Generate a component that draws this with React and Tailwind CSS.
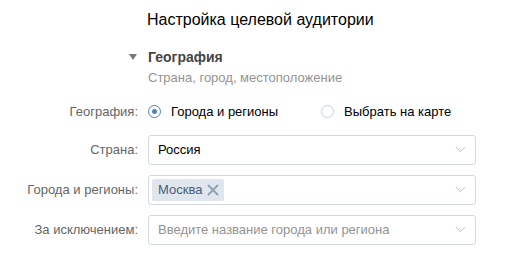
import { ChevronDown, X } from 'lucide-react'

function Radio({ checked, label }) {
  return (
    <label className="flex items-center gap-[10px] cursor-pointer">
      <span
        className={`w-[13px] h-[13px] rounded-full border flex items-center justify-center ${
          checked ? 'border-[#5181b8]' : 'border-[#c5d0db]'
        }`}
      >
        {checked && <span className="w-[5px] h-[5px] rounded-full bg-[#5181b8]" />}
      </span>
      <span className="text-[13px] text-black">{label}</span>
    </label>
  )
}

function SelectBox({ children }) {
  return (
    <div className="h-[30px] w-[328px] border border-[#d3d9de] rounded-[3px] bg-white flex items-center pl-[3px] pr-[6px]">
      <div className="flex-1 flex items-center min-w-0">{children}</div>
      <ChevronDown className="w-[17px] h-[17px] text-[#b8bec4]" strokeWidth={1.4} />
    </div>
  )
}

function Row({ label, children }) {
  return (
    <div className="grid grid-cols-[138px_1fr] gap-[10px] items-center">
      <span className="text-right text-[13px] text-[#656565]">{label}</span>
      <div>{children}</div>
    </div>
  )
}

export default function App() {
  return (
    <div className="w-[508px] h-[256px] bg-white font-['Liberation_Sans',Arial,sans-serif] overflow-hidden">
      {/* Title */}
      <div className="pl-[147px] pt-[9px]">
        <h1 className="text-[16px] leading-[22px] text-black">Настройка целевой аудитории</h1>
      </div>

      {/* Section heading */}
      <div className="pl-[129px] mt-[19px] flex items-start">
        <span className="mt-[4px] mr-[11px] w-0 h-0 border-l-[4px] border-r-[4px] border-t-[6px] border-l-transparent border-r-transparent border-t-[#777]" />
        <div>
          <div className="text-[14px] leading-[14px] font-bold text-[#444]">География</div>
          <div className="text-[13px] leading-[16px] mt-[6px] text-[#939393]">Страна, город, местоположение</div>
        </div>
      </div>

      {/* Form */}
      <div className="mt-[16px] flex flex-col">
        <Row label="География:">
          <div className="flex items-center gap-[43px] h-[18px]">
            <Radio checked label="Города и регионы" />
            <Radio label="Выбрать на карте" />
          </div>
        </Row>

        <div className="mt-[13px] flex flex-col gap-[10px]">
          <Row label="Страна:">
            <SelectBox>
              <span className="pl-[6px] text-[13px] text-black">Россия</span>
            </SelectBox>
          </Row>

          <Row label="Города и регионы:">
            <SelectBox>
              <span className="h-[22px] pl-[6px] pr-[2px] gap-[2px] rounded-[2px] bg-[#dfe6ee] flex items-center text-[13px] text-[#4a5d73]">
                Москва
                <X className="w-[18px] h-[18px] text-[#8fa1b4]" strokeWidth={2.4} />
              </span>
            </SelectBox>
          </Row>

          <Row label="За исключением:">
            <SelectBox>
              <span className="pl-[6px] text-[13px] text-[#939393]">Введите название города или региона</span>
            </SelectBox>
          </Row>
        </div>
      </div>
    </div>
  )
}
